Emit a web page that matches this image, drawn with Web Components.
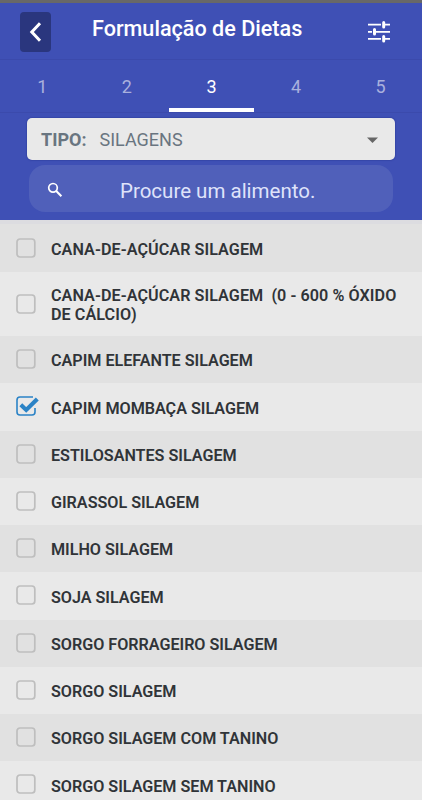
<!DOCTYPE html>
<html lang="pt-BR">
<head>
<meta charset="utf-8">
<title>Formulação de Dietas</title>
<style>
html,body{margin:0;height:800px;overflow:hidden;background:#e9e9e9;font-family:Roboto,"Liberation Sans",sans-serif}
</style>
</head>
<body>
<diet-app></diet-app>
<script>
const define = (name, html, setup) => {
  const t = document.createElement('template');
  t.innerHTML = html;
  customElements.define(name, class extends HTMLElement {
    constructor() {
      super();
      this.attachShadow({mode: 'open'}).append(t.content.cloneNode(true));
    }
    connectedCallback() { if (setup) setup(this, this.shadowRoot); }
  });
};

define('app-bar', `
<style>
:host{display:grid;grid-template-columns:72px 1fr 88px;height:57px;box-sizing:border-box;border-bottom:1px solid #3b4aac;color:#fff}
.back{width:31px;height:40px;margin:9px 0 0 20px;background:#2a367e;border-radius:4px;display:block}
h1{margin:0;padding:12px 0 0 20px;font-size:21.6px;line-height:28px;font-weight:500;white-space:nowrap}
.tune{margin:15px 0 0 32px;display:block}
</style>
<svg class="back" viewBox="0 0 31 40"><path d="M20 11.2L11.8 20l8.2 8.8" fill="none" stroke="#fff" stroke-width="3"/></svg>
<h1><slot></slot></h1>
<svg class="tune" width="26" height="26" viewBox="0 0 26 26" fill="none" stroke="#fff">
<g stroke-width="1.8"><path d="M2 6.7h13M19 6.7h5M2 13.8h4M10 13.8h14M2 20.8h13M19 20.8h5"/></g>
<g stroke-width="3" stroke-linecap="round"><path d="M17.7 4.6v4.4M8.5 11.6v4.4M17.7 18.6v4.4"/></g></svg>`);

define('step-tab', `
<style>
:host{display:block;box-sizing:border-box;height:52px;padding-top:15px;text-align:center;font-size:18px;line-height:24px;color:#a9b0dd;border-bottom:4px solid transparent}
:host([active]){color:#fff;border-color:#fff}
</style><slot></slot>`);

define('step-tabs', `
<style>:host{display:grid;grid-template-columns:repeat(5,84.6px);height:53px;box-sizing:border-box;border-bottom:1px solid #3b4aac}</style><slot></slot>`);

define('type-select', `
<style>
:host{display:flex;align-items:center;box-sizing:border-box;height:42px;margin:5px 27px 0;padding:1px 17px 0 14px;border-radius:5px;background:#e9e9e9;color:#697580;font-size:18px;box-shadow:0 0 1px 1px #3646a8}
b{font-weight:700;margin-right:13px}
svg{margin-left:auto}
</style><b>TIPO:</b><slot></slot>
<svg width="11" height="6" viewBox="0 0 11 6"><path d="M0 .5h11L5.5 6z" fill="#666"/></svg>`);

define('food-search', `
<style>
:host{display:flex;align-items:center;box-sizing:border-box;height:47px;margin:5px 29px 0;padding:4px 0 0 17px;border-radius:16px;background:#5060ba;color:#dfe3fa;font-size:20.5px}
svg{margin-top:-1px}
span{margin-left:56px;white-space:nowrap}
</style>
<svg width="18" height="18" viewBox="0 0 18 18" fill="none" stroke="#fff"><circle cx="7" cy="6.8" r="4.3" stroke-width="1.7"/><path d="M10 9.8l5.4 5.4" stroke-width="2.1"/></svg>
<span><slot></slot></span>`);

define('check-mark', `
<style>
:host{display:block;width:24px;height:20px;flex:none}
svg{display:block;overflow:visible}
.on{display:none}
:host([checked]) .on{display:block}
:host([checked]) .off{display:none}
</style>
<svg width="24" height="20" viewBox="0 0 24 20" fill="none">
<rect class="off" x="1" y="1" width="17.8" height="18" rx="3" stroke="#bebebe" stroke-width="1.7"/>
<g class="on" stroke="#2b83c6"><path d="M17 1H4Q1 1 1 4V16Q1 19 4 19H16Q19 19 19 16V12" stroke-width="1.6"/><path d="M4.8 8.8L10.2 14L21.3 3" stroke-width="4.1"/></g></svg>`);

define('food-row', `
<style>
:host{display:flex;align-items:center;box-sizing:border-box;height:47.25px;padding-left:16px;background:#e9e9e9;color:#303438}
:host(:nth-child(odd)){background:#e1e1e1}
:host(:first-child){height:48px}
:host([tall]){height:64px}
check-mark{margin:-1px 11px 0 0}
.label{padding-top:4px;font-size:16.16px;line-height:18.7px;font-weight:600;white-space:pre;letter-spacing:-.02px}
:host(:nth-child(-n+2)) .label{letter-spacing:.06px}
:host([tall]) .label{padding-top:3px}
</style><check-mark></check-mark><div class="label"><slot></slot></div>`,
(el, root) => root.querySelector('check-mark').toggleAttribute('checked', el.hasAttribute('checked')));

define('food-list', `<style>:host{display:block;border-top:4px solid #dcdce0}</style><slot></slot>`);

define('diet-app', `
<style>
:host{display:block;height:800px;overflow:hidden}
header{height:220px;box-sizing:border-box;border-top:3px solid #686868;background:#3f50b5}
</style>
<header>
<app-bar>Formulação de Dietas</app-bar>
<step-tabs><step-tab>1</step-tab><step-tab>2</step-tab><step-tab active>3</step-tab><step-tab>4</step-tab><step-tab>5</step-tab></step-tabs>
<type-select>SILAGENS</type-select>
<food-search>Procure um alimento.</food-search>
</header>
<food-list><food-row>CANA-DE-AÇÚCAR SILAGEM</food-row><food-row tall>CANA-DE-AÇÚCAR SILAGEM  (0 - 600 % ÓXIDO
DE CÁLCIO)</food-row><food-row>CAPIM ELEFANTE SILAGEM</food-row><food-row checked>CAPIM MOMBAÇA SILAGEM</food-row><food-row>ESTILOSANTES SILAGEM</food-row><food-row>GIRASSOL SILAGEM</food-row><food-row>MILHO SILAGEM</food-row><food-row>SOJA SILAGEM</food-row><food-row>SORGO FORRAGEIRO SILAGEM</food-row><food-row>SORGO SILAGEM</food-row><food-row>SORGO SILAGEM COM TANINO</food-row><food-row>SORGO SILAGEM SEM TANINO</food-row></food-list>`);
</script>
</body>
</html>
